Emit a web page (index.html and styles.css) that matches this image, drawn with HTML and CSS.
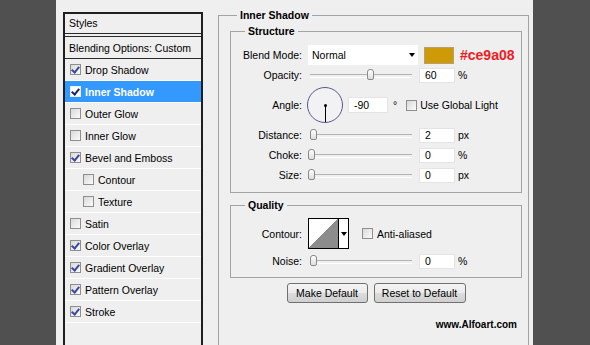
FILE: index.html
```html
<!DOCTYPE html>
<html lang="en">
<head>
  <meta charset="UTF-8">
  <title>Layer Style - Inner Shadow</title>
  <link rel="stylesheet" href="styles.css">
</head>
<body>

  <div class="window">

    <!-- Effects list on the left -->
    <aside class="styles-list">
      <div class="styles-head">Styles</div>
      <ul class="effects">
        <li class="blend">Blending Options: Custom</li>
        <li><span class="check on"></span>Drop Shadow</li>
        <li class="active"><span class="check on"></span>Inner Shadow</li>
        <li><span class="check"></span>Outer Glow</li>
        <li><span class="check"></span>Inner Glow</li>
        <li><span class="check on"></span>Bevel and Emboss</li>
        <li class="sub"><span class="check"></span>Contour</li>
        <li class="sub"><span class="check"></span>Texture</li>
        <li><span class="check"></span>Satin</li>
        <li><span class="check on"></span>Color Overlay</li>
        <li><span class="check on"></span>Gradient Overlay</li>
        <li><span class="check on"></span>Pattern Overlay</li>
        <li><span class="check on"></span>Stroke</li>
      </ul>
    </aside>

    <!-- Inner Shadow settings -->
    <div class="settings">
      <fieldset class="group outer">
        <legend>Inner Shadow</legend>

        <fieldset class="group structure">
          <legend>Structure</legend>

          <div class="row">
            <span class="label">Blend Mode:</span>
            <div class="select">Normal <span class="arrow"></span></div>
            <span class="swatch"></span>
            <span class="hex">#ce9a08</span>
          </div>

          <div class="row">
            <span class="label">Opacity:</span>
            <div class="slider"><span class="thumb" style="left: 57px"></span></div>
            <span class="field">60</span>
            <span class="unit">%</span>
          </div>

          <div class="row angle">
            <span class="label">Angle:</span>
            <div class="dial"><span class="hand"></span></div>
            <span class="field wide">-90</span>
            <span class="deg">&deg;</span>
            <span class="check global"></span>
            <span>Use Global Light</span>
          </div>

          <div class="row">
            <span class="label">Distance:</span>
            <div class="slider"><span class="thumb" style="left: 0px"></span></div>
            <span class="field">2</span>
            <span class="unit">px</span>
          </div>

          <div class="row">
            <span class="label">Choke:</span>
            <div class="slider"><span class="thumb" style="left: -2px"></span></div>
            <span class="field">0</span>
            <span class="unit">%</span>
          </div>

          <div class="row">
            <span class="label">Size:</span>
            <div class="slider"><span class="thumb" style="left: -2px"></span></div>
            <span class="field">0</span>
            <span class="unit">px</span>
          </div>
        </fieldset>

        <fieldset class="group quality">
          <legend>Quality</legend>

          <div class="row contour">
            <span class="label">Contour:</span>
            <div class="contour-box">
              <span class="curve"></span>
              <span class="curve-menu"><span class="arrow"></span></span>
            </div>
            <span class="check anti"></span>
            <span>Anti-aliased</span>
          </div>

          <div class="row">
            <span class="label">Noise:</span>
            <div class="slider"><span class="thumb" style="left: 0px"></span></div>
            <span class="field">0</span>
            <span class="unit">%</span>
          </div>
        </fieldset>

        <div class="buttons">
          <button type="button" class="btn-default">Make Default</button>
          <button type="button" class="btn-reset">Reset to Default</button>
        </div>

        <div class="credit">www.Alfoart.com</div>
      </fieldset>
    </div>

  </div>

</body>
</html>
```

FILE: styles.css
```css
* {
  box-sizing: border-box;
}

body {
  margin: 0;
  background-color: #505050;
  font-family: 'Liberation Sans', Arial, sans-serif;
  font-size: 10.5px;
  color: #000;
  overflow: hidden;
}

.window {
  margin-left: 56px;
  width: 477px;
  height: 345px;
  background-color: #efefef;
  display: flex;
  align-items: flex-start;
  overflow: hidden;
}

/* Styles list */
.styles-list {
  margin: 12px 0 0 7px;
  width: 140px;
  height: 340px;
  border: 2px solid #1f1f1f;
  border-bottom: none;
  flex: none;
}

.styles-head {
  height: 20px;
  line-height: 19px;
  padding-left: 4px;
  border-bottom: 1px solid #2b2b2b;
  margin-bottom: 2px;
}

.effects {
  list-style: none;
  margin: 0;
  padding: 0;
  border-top: 1px solid #2b2b2b;
}

.effects li {
  height: 22px;
  display: flex;
  align-items: center;
  padding-left: 5px;
  border-bottom: 1px solid #fdfdfd;
}

.effects li.blend {
  height: 22px;
  padding-left: 4px;
  border-bottom: 1px solid #2b2b2b;
}

.effects li.sub {
  padding-left: 18px;
}

.effects li.active {
  background-color: #3399ff;
  color: #fff;
  font-weight: bold;
}

/* Checkboxes */
.check {
  width: 11px;
  height: 11px;
  border: 1px solid #8e8e8e;
  background: linear-gradient(135deg, #d9d9d9, #fbfbfb);
  margin-right: 4px;
  display: flex;
  align-items: center;
  justify-content: center;
  flex: none;
}

.check.on::after {
  content: "";
  width: 3px;
  height: 6px;
  border: solid #3a4a9c;
  border-width: 0 2px 2px 0;
  transform: rotate(40deg);
  margin-top: -2px;
}

.active .check {
  background: #fff;
  border-color: #e8f2ff;
}

.active .check.on::after {
  border-color: #1b2466;
}

/* Group boxes */
.settings {
  margin: 9px 0 0 15px;
}

.group {
  margin: 0;
  padding: 0;
  min-width: 0;
  border: 1px solid #a3a3a3;
}

.group legend {
  font-weight: bold;
  line-height: 13px;
  padding: 0 3px;
}

.outer {
  width: 311px;
  height: 360px;
  padding: 3px 6px 0 11px;
}

.outer > legend {
  margin-left: 7px;
}

.structure {
  width: 292px;
  padding: 7px 0;
}

.quality {
  width: 292px;
  margin-top: 6px;
  padding: 6px 0 6px;
}

.structure legend,
.quality legend {
  margin-left: 14px;
}

/* Rows */
.row {
  display: flex;
  align-items: center;
  height: 20px;
  white-space: nowrap;
}

.row.angle {
  height: 40px;
}

.row.contour {
  height: 31px;
  margin-bottom: 2px;
}

.row .label {
  width: 71px;
  text-align: right;
  margin-right: 6px;
  flex: none;
}

.select {
  width: 110px;
  height: 20px;
  background-color: #fff;
  display: flex;
  align-items: center;
  justify-content: space-between;
  padding: 0 3px 0 4px;
}

.arrow {
  width: 0;
  height: 0;
  border-left: 3.5px solid transparent;
  border-right: 3.5px solid transparent;
  border-top: 4px solid #000;
}

.swatch {
  width: 30px;
  height: 17px;
  margin-left: 6px;
  background-color: #ce9a08;
  border: 1px solid #b9a070;
}

.hex {
  margin-left: 6px;
  color: #ee1c24;
  font-weight: bold;
  font-size: 14px;
}

/* Sliders */
.slider {
  position: relative;
  width: 102px;
  height: 12px;
  margin-left: 2px;
  flex: none;
}

.slider::before {
  content: "";
  position: absolute;
  left: 0;
  right: 0;
  top: 5px;
  height: 2px;
  border-top: 1px solid #b4b4b4;
  border-bottom: 1px solid #fff;
}

.thumb {
  position: absolute;
  top: 0;
  width: 7px;
  height: 11px;
  border: 1px solid #8a8a8a;
  border-radius: 3px 3px 2px 2px;
  background: linear-gradient(#fff, #dedede);
}

.field {
  width: 36px;
  height: 15px;
  margin-left: 7px;
  padding-left: 5px;
  line-height: 13px;
  background-color: #fff;
  border: 1px solid #e4e4e4;
}

.field.wide {
  width: 40px;
  height: 16px;
  margin-left: 5px;
  line-height: 14px;
}

.unit {
  margin-left: 3px;
}

/* Angle dial */
.dial {
  width: 36px;
  height: 36px;
  margin-left: -1px;
  border-radius: 50%;
  border: 1px solid #55598a;
  background-color: #f2f2f4;
  display: flex;
  justify-content: center;
  align-items: flex-end;
}

.hand {
  width: 1px;
  height: 17px;
  background-color: #000;
}

.hand::before {
  content: "";
  display: block;
  width: 3px;
  height: 3px;
  margin: -1px 0 0 -1px;
  border-radius: 50%;
  background-color: #000;
}

.deg {
  margin-left: 5px;
}

.check.global {
  margin-left: 9px;
  margin-right: 3px;
}

/* Contour picker */
.contour-box {
  width: 41px;
  height: 31px;
  border: 1px solid #000;
  background-color: #fff;
  display: flex;
}

.curve {
  width: 30px;
  border-right: 1px solid #000;
  background: linear-gradient(to bottom right, #fff 50%, #8c8c8c 50%);
}

.curve-menu {
  flex: 1;
  display: flex;
  align-items: center;
  justify-content: center;
}

.check.anti {
  margin-left: 13px;
}

/* Buttons */
.buttons {
  display: flex;
  justify-content: center;
  gap: 6px;
  margin-top: 5px;
}

.buttons button {
  height: 20px;
  padding: 0;
  font: inherit;
  color: #000;
  border: 1px solid #707070;
  border-radius: 3px;
  background: linear-gradient(#f4f4f4 0%, #ebebeb 50%, #dcdcdc 51%, #cfcfcf 100%);
}

.btn-default {
  width: 81px;
}

.btn-reset {
  width: 92px;
}

.credit {
  margin-top: 15px;
  padding-right: 5px;
  text-align: right;
  font-weight: bold;
  font-size: 10px;
  line-height: 13px;
}
```
